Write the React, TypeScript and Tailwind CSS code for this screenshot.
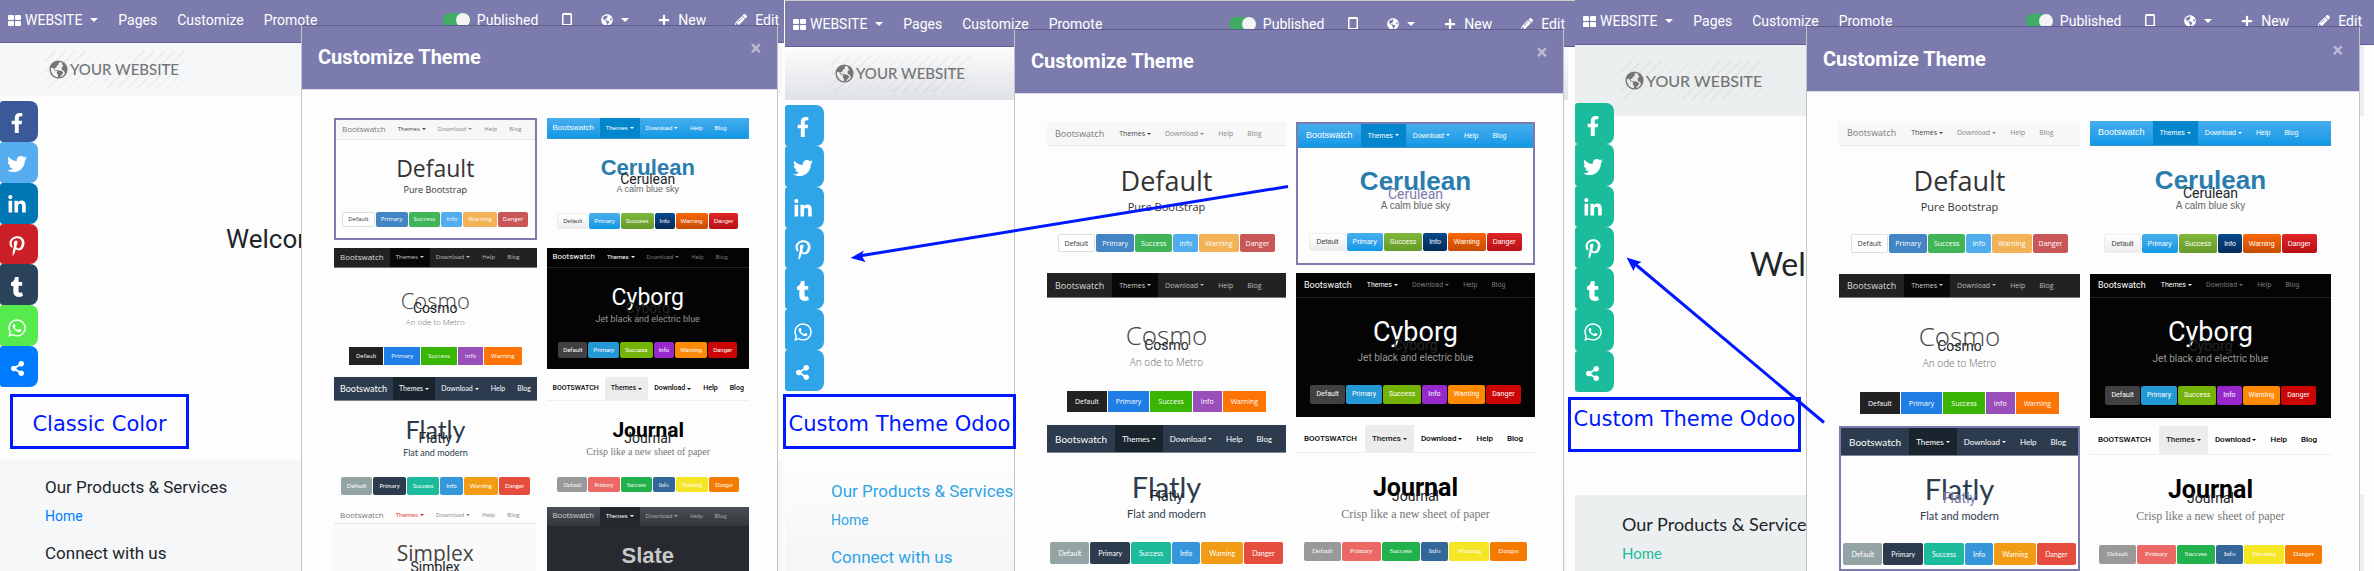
import React from "react";
import {
  FaFacebookF,
  FaTwitter,
  FaLinkedinIn,
  FaPinterestP,
  FaTumblr,
  FaWhatsapp,
  FaShareAlt,
  FaGlobeAmericas,
  FaPlus,
  FaPencilAlt,
} from "react-icons/fa";

type Size = "small" | "large";

type Theme = {
  name: string;
  tagline: string;
  brand: string;
  brandSize?: Record<Size, string>;
  linkSize?: Record<Size, string>;
  font: string;
  card: string;
  rows: string;
  nav: string;
  brandColor: string;
  active: string;
  link: string;
  title: string;
  titleSize: Record<Size, string>;
  sub: string;
  subSize: Record<Size, string>;
  pad: Record<Size, string>;
  corner: string;
  swatches: string[];
  hideLabel?: boolean;
};

const ROWS_REGULAR =
  "grid-rows-[minmax(0,17fr)_minmax(0,12fr)_minmax(0,24fr)_minmax(0,12fr)_minmax(0,13fr)_minmax(0,13fr)_minmax(0,9fr)]";
const ROWS_COSMO =
  "grid-rows-[minmax(0,17fr)_minmax(0,14fr)_minmax(0,24fr)_minmax(0,13fr)_minmax(0,14fr)_minmax(0,15fr)_minmax(0,3fr)]";
const ROWS_FLATLY =
  "grid-rows-[minmax(0,20fr)_minmax(0,11fr)_minmax(0,24fr)_minmax(0,14fr)_minmax(0,13fr)_minmax(0,15fr)_minmax(0,3fr)]";
const ROWS_JOURNAL =
  "grid-rows-[minmax(0,20fr)_minmax(0,12fr)_minmax(0,24fr)_minmax(0,12fr)_minmax(0,14fr)_minmax(0,13fr)_minmax(0,5fr)]";
const ROWS_SIMPLEX =
  "grid-rows-[minmax(0,14fr)_minmax(0,13fr)_minmax(0,24fr)_minmax(0,14fr)_minmax(0,12fr)_minmax(0,13fr)_minmax(0,10fr)]";

const THEMES: Theme[] = [
  {
    name: "Default",
    tagline: "Pure Bootstrap",
    brand: "Bootswatch",
    font: "font-['Open_Sans',sans-serif]",
    card: "bg-[#fdfdfd]",
    rows: ROWS_REGULAR,
    nav: "bg-[#f7f7f7] border-b border-[#e9e9e9]",
    brandColor: "text-[#777777]",
    active: "text-[#444444]",
    link: "text-[#888888]",
    title: "text-[#333333]",
    titleSize: { small: "text-[23px]", large: "text-[27px]" },
    sub: "text-[#333333]",
    subSize: { small: "text-[9px]", large: "text-[11px]" },
    pad: { small: "px-[5px]", large: "px-[6px]" },
    corner: "rounded-[2px]",
    swatches: [
      "bg-white text-[#333333] border border-[#dddddd]",
      "bg-[#4384c4] text-white",
      "bg-[#3fb558] text-white",
      "bg-[#50aeef] text-white",
      "bg-[#f2b257] text-white",
      "bg-[#c95657] text-white",
    ],
    hideLabel: true,
  },
  {
    name: "Cerulean",
    tagline: "A calm blue sky",
    brand: "Bootswatch",
    font: "font-['Liberation_Sans',sans-serif]",
    card: "bg-[#fdfdfd]",
    rows: ROWS_REGULAR,
    nav: "bg-linear-to-b from-[#45aeed] to-[#0d98e6] border-b border-[#3b95cc]",
    brandColor: "text-white",
    active: "text-white bg-[#0486cc]",
    link: "text-white",
    title: "text-[#2b7cae] font-bold",
    titleSize: { small: "text-[22px]", large: "text-[26px]" },
    sub: "text-[#666666]",
    subSize: { small: "text-[9px]", large: "text-[10px]" },
    pad: { small: "px-[5px]", large: "px-[6px]" },
    corner: "rounded-[2px]",
    swatches: [
      "bg-linear-to-b from-white to-[#ececec] text-[#444444] border border-[#eeeeee]",
      "bg-linear-to-b from-[#47afec] to-[#0c97e5] text-white",
      "bg-linear-to-b from-[#80b83b] to-[#669a2a] text-white",
      "bg-linear-to-b from-[#08498e] to-[#042c58] text-white",
      "bg-linear-to-b from-[#fb6603] to-[#c54c04] text-white",
      "bg-linear-to-b from-[#e02427] to-[#b71014] text-white",
    ],
  },
  {
    name: "Cosmo",
    tagline: "An ode to Metro",
    brand: "Bootswatch",
    font: "font-['Open_Sans',sans-serif]",
    card: "bg-[#fdfdfd]",
    rows: ROWS_COSMO,
    nav: "bg-[#222222] border-b border-[#777777]",
    brandColor: "text-[#dddddd]",
    active: "text-[#cccccc] bg-[#080808]",
    link: "text-[#bbbbbb]",
    title: "text-[#444444] font-light",
    titleSize: { small: "text-[22px]", large: "text-[26px]" },
    sub: "text-[#666666] font-light",
    subSize: { small: "text-[8px]", large: "text-[10px]" },
    pad: { small: "px-[7px]", large: "px-[8px]" },
    corner: "",
    swatches: [
      "bg-[#222222] text-white",
      "bg-[#1f7de6] text-white",
      "bg-[#39b603] text-white",
      "bg-[#994fba] text-white",
      "bg-[#fd7405] text-white",
    ],
  },
  {
    name: "Cyborg",
    tagline: "Jet black and electric blue",
    brand: "Bootswatch",
    font: "font-['Roboto',sans-serif]",
    card: "bg-[#040404]",
    rows: ROWS_REGULAR,
    nav: "bg-[#040404] border-b border-[#222222]",
    brandColor: "text-white",
    active: "text-white",
    link: "text-[#777777]",
    title: "text-white font-normal",
    titleSize: { small: "text-[23px]", large: "text-[27px]" },
    sub: "text-[#999999]",
    subSize: { small: "text-[9px]", large: "text-[10px]" },
    pad: { small: "px-[5px]", large: "px-[6px]" },
    corner: "rounded-[2px]",
    swatches: [
      "bg-[#414141] text-white",
      "bg-[#2398d4] text-white",
      "bg-[#75b206] text-white",
      "bg-[#9628cc] text-white",
      "bg-[#fd8905] text-white",
      "bg-[#cb0404] text-white",
    ],
  },
  {
    name: "Flatly",
    tagline: "Flat and modern",
    brand: "Bootswatch",
    brandSize: { small: "text-[9px]", large: "text-[10px]" },
    linkSize: { small: "text-[7px]", large: "text-[8px]" },
    font: "font-['Lato',sans-serif]",
    card: "bg-[#fdfdfd]",
    rows: ROWS_FLATLY,
    nav: "bg-[#2c3c4e] border-b border-[#7c8792]",
    brandColor: "text-white",
    active: "text-white bg-[#1a242f]",
    link: "text-white",
    title: "text-[#2c3c4e]",
    titleSize: { small: "text-[25px]", large: "text-[29px]" },
    sub: "text-[#2c3c4e]",
    subSize: { small: "text-[9px]", large: "text-[11px]" },
    pad: { small: "px-[6px]", large: "px-[8px]" },
    corner: "rounded-[2px]",
    swatches: [
      "bg-[#94a4a5] text-white",
      "bg-[#2c3c4e] text-white",
      "bg-[#1bbb9b] text-white",
      "bg-[#3597da] text-white",
      "bg-[#f29b14] text-white",
      "bg-[#e64c3d] text-white",
    ],
  },
  {
    name: "Journal",
    tagline: "Crisp like a new sheet of paper",
    brand: "BOOTSWATCH",
    brandSize: { small: "text-[7px]", large: "text-[8px]" },
    linkSize: { small: "text-[7px]", large: "text-[8px]" },
    font: "font-['Roboto',sans-serif] font-medium",
    card: "bg-[#fdfdfd]",
    rows: ROWS_JOURNAL,
    nav: "bg-[#fefefe] border-b border-[#eeeeee]",
    brandColor: "text-black",
    active: "text-[#222222] bg-[#ececec]",
    link: "text-black",
    title: "text-black font-bold",
    titleSize: { small: "text-[21px]", large: "text-[25px]" },
    sub: "text-[#777777] font-['Liberation_Serif',serif] font-normal",
    subSize: { small: "text-[10px]", large: "text-[12px]" },
    pad: { small: "px-[6px]", large: "px-[8px]" },
    corner: "rounded-[2px]",
    swatches: [
      "bg-[#999999] text-white font-['Liberation_Serif',serif]",
      "bg-[#eb6864] text-white font-['Liberation_Serif',serif]",
      "bg-[#22b24c] text-white font-['Liberation_Serif',serif]",
      "bg-[#336699] text-white font-['Liberation_Serif',serif]",
      "bg-[#f5e625] text-white font-['Liberation_Serif',serif]",
      "bg-[#f57a00] text-white font-['Liberation_Serif',serif]",
    ],
  },
  {
    name: "Simplex",
    tagline: "Mini and minimalist",
    brand: "Bootswatch",
    font: "font-['Open_Sans',sans-serif]",
    card: "bg-[#fafafa]",
    rows: ROWS_SIMPLEX,
    nav: "bg-[#fdfdfd] border-b border-[#eaeaea]",
    brandColor: "text-[#777777]",
    active: "text-[#d9230f]",
    link: "text-[#888888]",
    title: "text-[#444444]",
    titleSize: { small: "text-[21px]", large: "text-[25px]" },
    sub: "text-[#777777]",
    subSize: { small: "text-[9px]", large: "text-[11px]" },
    pad: { small: "px-[5px]", large: "px-[6px]" },
    corner: "rounded-[2px]",
    swatches: [],
  },
  {
    name: "Slate",
    tagline: "Shades of gunmetal gray",
    brand: "Bootswatch",
    font: "font-['Liberation_Sans',sans-serif]",
    card: "bg-[#272b30]",
    rows: ROWS_REGULAR,
    nav: "bg-linear-to-b from-[#484e55] to-[#34383d] border-b border-[#24272b]",
    brandColor: "text-[#c8c8c8]",
    active: "text-white bg-[#24282c]",
    link: "text-[#a9a9a9]",
    title: "text-[#c8c8c8] font-bold",
    titleSize: { small: "text-[22px]", large: "text-[26px]" },
    sub: "text-[#999999]",
    subSize: { small: "text-[9px]", large: "text-[11px]" },
    pad: { small: "px-[5px]", large: "px-[6px]" },
    corner: "rounded-[2px]",
    swatches: [],
  },
];

const SWATCH_NAMES = ["Default", "Primary", "Success", "Info", "Warning", "Danger"];

const PREVIEW = {
  small: {
    brandPad: "px-[6px]",
    brandSize: "text-[8px]",
    linkPad: "px-[6px]",
    linkSize: "text-[6px]",
    swatch: "text-[6px]",
  },
  large: {
    brandPad: "px-[8px]",
    brandSize: "text-[9px]",
    linkPad: "px-[7px]",
    linkSize: "text-[7px]",
    swatch: "text-[7px]",
  },
};

function TinyCaret() {
  return (
    <svg viewBox="0 0 4 2" className="ml-[2px] h-[2px] w-[4px]" fill="currentColor" aria-hidden="true">
      <path d="M0 0h4L2 2z" />
    </svg>
  );
}

function ThemeCard({ theme, size, selected }: { theme: Theme; size: Size; selected: boolean }) {
  const s = PREVIEW[size];
  const brand = theme.brandSize?.[size] ?? s.brandSize;
  const link = `flex items-center ${s.linkPad} ${theme.linkSize?.[size] ?? s.linkSize}`;
  return (
    <button
      type="button"
      aria-pressed={selected}
      className={`relative grid aspect-[5/3] w-full overflow-hidden whitespace-nowrap text-left leading-none ${theme.rows} ${theme.card} ${theme.font} ${
        selected ? "border-2 border-[#7c7bad]" : ""
      }`}
    >
      <span className={`row-start-1 flex items-stretch ${theme.nav}`}>
        <span className={`flex items-center ${s.brandPad} ${brand} ${theme.brandColor}`}>{theme.brand}</span>
        <span className={`${link} ${theme.active}`}>
          Themes
          <TinyCaret />
        </span>
        <span className={`${link} ${theme.link}`}>
          Download
          <TinyCaret />
        </span>
        <span className={`${link} ${theme.link}`}>Help</span>
        <span className={`${link} ${theme.link}`}>Blog</span>
      </span>
      <span className={`row-start-3 flex items-center justify-center ${theme.title} ${theme.titleSize[size]}`}>
        {theme.name}
      </span>
      <span className={`row-start-4 flex items-center justify-center ${theme.sub} ${theme.subSize[size]}`}>
        {theme.tagline}
      </span>
      <span className={`row-start-6 flex items-stretch justify-center gap-px ${s.swatch}`}>
        {theme.swatches.map((color, i) => (
          <span key={i} className={`flex items-center ${theme.corner} ${theme.pad[size]} ${color}`}>
            {SWATCH_NAMES[i]}
          </span>
        ))}
      </span>
      {!theme.hideLabel && (
        <span
          className={`absolute inset-0 flex items-center justify-center font-['Roboto',sans-serif] text-sm font-normal ${
            selected ? "text-[#7c7bad]" : "text-[#212529]"
          }`}
        >
          {theme.name}
        </span>
      )}
    </button>
  );
}

function Caret() {
  return (
    <svg viewBox="0 0 8 4" className="h-1 w-2" fill="currentColor" aria-hidden="true">
      <path d="M0 0h8L4 4z" />
    </svg>
  );
}

function TopBar({ className }: { className: string }) {
  return (
    <nav
      className={`flex items-start justify-between border-b border-[#5f5e97] bg-[#7c7bad] pl-2 text-sm leading-5 text-white ${className}`}
    >
      <div className="flex items-center gap-5">
        <button type="button" className="flex items-center gap-1">
          <svg viewBox="0 0 13 11" className="h-[11px] w-[13px]" fill="currentColor" aria-hidden="true">
            <rect width="6" height="5" rx="1" />
            <rect x="7" width="6" height="5" rx="1" />
            <rect y="6" width="6" height="5" rx="1" />
            <rect x="7" y="6" width="6" height="5" rx="1" />
          </svg>
          WEBSITE
          <span className="ml-1">
            <Caret />
          </span>
        </button>
        <a href="#pages">Pages</a>
        <a href="#customize">Customize</a>
        <a href="#promote">Promote</a>
      </div>
      <div className="flex items-center">
        <label className="mr-6 flex items-center gap-[7px]">
          <input
            type="checkbox"
            defaultChecked
            className="h-[14px] w-[27px] appearance-none rounded-full bg-[#40ad67] before:ml-auto before:block before:size-[14px] before:rounded-full before:bg-[#f4f4f4]"
          />
          Published
        </label>
        <button type="button" aria-label="Mobile preview" className="mr-[29px]">
          <svg viewBox="0 0 10 14" className="h-[14px] w-[10px]" aria-hidden="true">
            <path
              fill="currentColor"
              fillRule="evenodd"
              d="M1.5 0h7A1.5 1.5 0 0 1 10 1.500v11A1.500 1.500 0 0 1 8.500 14h-7A1.500 1.500 0 0 1 0 12.500v-11A1.500 1.500 0 0 1 1.500 0zM1.500 2v9h7V2z"
            />
          </svg>
        </button>
        <button type="button" aria-label="Language" className="mr-[29px] flex items-center gap-2">
          <FaGlobeAmericas className="size-3" />
          <Caret />
        </button>
        <button type="button" className="mr-[29px] flex items-center gap-2">
          <FaPlus className="size-3" />
          New
        </button>
        <button type="button" className="flex items-center gap-2">
          <FaPencilAlt className="size-3" />
          Edit
        </button>
      </div>
    </nav>
  );
}

function Logo({ large }: { large: boolean }) {
  return (
    <a
      href="#home"
      className={`flex items-center gap-[2px] bg-[repeating-linear-gradient(135deg,rgba(0,0,0,0.05)_0_1px,transparent_1px_7px)] pl-1 font-['Lato',sans-serif] font-medium text-[#757575] ${
        large ? "h-[39px] w-[145px] text-base" : "h-[37px] w-[139px] text-[15px]"
      }`}
    >
      <svg viewBox="0 0 20 20" className="size-[19px] shrink-0" aria-hidden="true">
        <circle cx="10" cy="10" r="8.800" fill="none" stroke="currentColor" strokeWidth="1.500" />
        <path
          fill="currentColor"
          d="M3 4.500 6 2l4-.8 1.500 1-1.500 1.300.5 1.300-2 1.200-1 2.200-1.800.4.800 1.700L9 11l-1 .6-2-.8-1.700-2.400L1.500 8zM9 10.800l3 .2 2.800 1.600-.5 2.200-2 1.700-1.300 2.500-1.400-.4-.2-3-1.400-1.800zM13 2l4 2.500 2 4-.5 4.500-1.500 1-1.600-2.600-1.900-.9-.3-2.500 1.800-1.900-1-1.500z"
        />
      </svg>
      <span className="whitespace-nowrap">YOUR WEBSITE</span>
    </a>
  );
}

const SOCIALS = [
  { label: "Facebook", Icon: FaFacebookF, color: "bg-[#3b5998]" },
  { label: "Twitter", Icon: FaTwitter, color: "bg-[#55acee]" },
  { label: "LinkedIn", Icon: FaLinkedinIn, color: "bg-[#0077b5]" },
  { label: "Pinterest", Icon: FaPinterestP, color: "bg-[#cb2027]" },
  { label: "Tumblr", Icon: FaTumblr, color: "bg-[#2a425a]" },
  { label: "WhatsApp", Icon: FaWhatsapp, color: "bg-[#55eb4c]" },
  { label: "Share", Icon: FaShareAlt, color: "bg-[#007bff]" },
];

function SocialBar({ className, color }: { className: string; color?: string }) {
  return (
    <div className={`absolute left-0 flex flex-col ${className}`}>
      {SOCIALS.map(({ label, Icon, color: own }) => (
        <a
          key={label}
          href={`#${label.toLowerCase()}`}
          aria-label={label}
          className={`flex flex-1 items-center justify-center rounded-l-[3px] rounded-r-lg pr-1 pt-1 text-white ${color ?? own}`}
        >
          <Icon className={label === "Share" ? "size-[15px]" : "size-5"} />
        </a>
      ))}
    </div>
  );
}

function ThemeDialog({ className, size, selected }: { className: string; size: Size; selected: string }) {
  return (
    <section
      role="dialog"
      aria-label="Customize Theme"
      className={`absolute bottom-0 overflow-hidden border-x border-t border-x-[#c4c4c4] border-t-[#5f5e8f] bg-[#fdfdfd] ${className}`}
    >
      <header className="flex h-16 items-start justify-between border-b border-[#dddde8] bg-[#7c7bad] pl-4 pr-4">
        <h2 className="pt-[17px] text-xl font-bold leading-7 text-white">Customize Theme</h2>
        <button type="button" aria-label="Close" className="pt-[10px] text-xl font-bold leading-6 text-white/50">
          ×
        </button>
      </header>
      <div className="grid grid-cols-2 gap-x-[10px] gap-y-2 pb-8 pl-8 pr-7 pt-7">
        {THEMES.map((theme) => (
          <ThemeCard key={theme.name} theme={theme} size={size} selected={theme.name === selected} />
        ))}
      </div>
    </section>
  );
}

function Caption({ className, children }: { className: string; children: React.ReactNode }) {
  return (
    <p
      className={`absolute flex h-[55px] justify-center whitespace-nowrap border-[3px] border-[#0018ff] font-['DejaVu_Sans',sans-serif] text-[21px] leading-8 text-[#0018ff] ${className}`}
    >
      {children}
    </p>
  );
}

function SiteFooter({ className, linkColor }: { className: string; linkColor: string }) {
  return (
    <footer className={`flex-1 ${className}`}>
      <h3 className="whitespace-nowrap">Our Products &amp; Services</h3>
      <a href="#home" className={`mt-2 block leading-5 ${linkColor}`}>
        Home
      </a>
      <h3 className="mt-4">Connect with us</h3>
    </footer>
  );
}

export default function App() {
  return (
    <main className="grid h-screen grid-cols-[785fr_790fr_799fr] overflow-hidden bg-[#fdfdfd] font-['Roboto',sans-serif] text-[#212529]">
      <section className="relative h-full min-w-0">
        <div className="relative flex h-full flex-col overflow-hidden">
          <TopBar className="mr-px h-[43px] pr-[5px] pt-[10px]" />
          <div className="mr-[3px] flex h-[53px] items-start bg-[#f5f7f9] pl-[45px] pt-2">
            <Logo large={false} />
          </div>
          <div className="h-[364px] pl-[226px] pt-[127px]">
            <h1 className="whitespace-nowrap text-[26px] leading-8">Welcome</h1>
          </div>
          <SiteFooter
            className="mr-[3px] bg-[#f5f7f9] pl-[45px] pt-4 text-sm [&_h3]:text-[17px] [&_h3]:leading-[22px]"
            linkColor="text-[#007bff]"
          />
          <SocialBar className="top-[101px] h-[286px] w-[38px]" />
          <ThemeDialog className="left-[301px] right-[7px] top-[25px]" size="small" selected="Default" />
        </div>
        <Caption className="left-[10px] top-[394px] w-[179px] items-end pb-[6px]">Classic Color</Caption>
      </section>

      <section className="relative h-full min-w-0">
        <div className="relative flex h-full flex-col overflow-hidden">
          <TopBar className="h-[47px] border-t border-t-[#cccccc] pr-[10px] pt-[13px]" />
          <div className="mr-[7px] flex h-[53px] items-start bg-linear-to-b from-[#fcfcfd] to-[#dfe2e6] pl-[46px] pt-2">
            <Logo large={false} />
          </div>
          <div className="h-[364px]" />
          <SiteFooter
            className="mr-[8px] bg-linear-to-b from-[#fdfdfd] to-[#f2f3f5] pl-[46px] pt-4 text-sm text-[#2fa4e7] [&_h3]:text-[17px] [&_h3]:leading-[22px]"
            linkColor="text-[#2fa4e7]"
          />
          <SocialBar className="top-[105px] h-[286px] w-[39px]" color="bg-[#2fa4e7]" />
          <ThemeDialog className="left-[229px] right-[11px] top-[29px]" size="large" selected="Cerulean" />
        </div>
        <Caption className="-left-[2px] top-[394px] z-10 w-[233px] items-end pb-[6px]">Custom Theme Odoo</Caption>
        <svg className="absolute left-[60px] top-[180px] h-[90px] w-[450px]" viewBox="0 0 450 90" aria-hidden="true">
          <path d="M443 6.500 14 76" stroke="#0018ff" strokeWidth="3" fill="none" />
          <path d="M5.500 78 19 70.500 16.500 75.500 20.500 82z" fill="#0018ff" />
        </svg>
      </section>

      <section className="relative h-full min-w-0">
        <div className="relative flex h-full flex-col overflow-hidden">
          <TopBar className="h-[45px] pr-[12px] pt-[11px]" />
          <div className="mr-[10px] flex h-[71px] items-start bg-[#ebeff0] pl-[46px] pt-4">
            <Logo large />
          </div>
          <div className="h-[379px] pl-[175px] pt-[128px]">
            <h1 className="whitespace-nowrap font-['Lato',sans-serif] text-[32px] leading-10">Welcome</h1>
          </div>
          <SiteFooter
            className="mr-[10px] bg-[#ebeff0] pl-[47px] pt-[18px] font-['Lato',sans-serif] text-[15px] [&_h3]:text-lg [&_h3]:leading-[22px]"
            linkColor="text-[#1abc9c]"
          />
          <SocialBar className="top-[103px] h-[289px] w-[39px]" color="bg-[#1abc9c]" />
          <ThemeDialog
            className="left-[231px] right-[14px] top-[26px] [&>div]:pt-[29px] [&>header]:h-[65px] [&>header]:pt-px"
            size="large"
            selected="Flatly"
          />
        </div>
        <Caption className="-left-[7px] top-[397px] w-[233px] items-start pt-[3px]">Custom Theme Odoo</Caption>
        <svg className="absolute left-[45px] top-[250px] h-[180px] w-[210px]" viewBox="0 0 210 180" aria-hidden="true">
          <path d="M204 172.500 15 14" stroke="#0018ff" strokeWidth="3" fill="none" />
          <path d="M6.500 7.500 21.500 12 16 15 13.500 21z" fill="#0018ff" />
        </svg>
      </section>
    </main>
  );
}
